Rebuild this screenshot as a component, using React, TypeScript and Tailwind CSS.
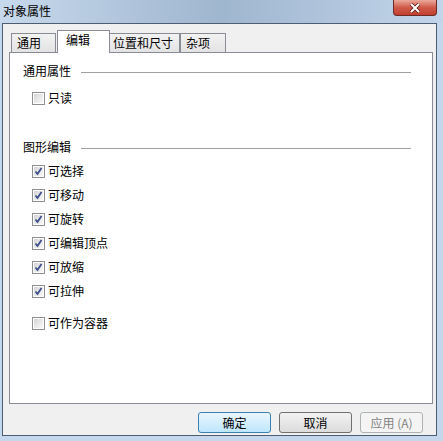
import React from "react";

const font = { fontFamily: '"Microsoft YaHei","Noto Sans CJK SC","Noto Sans",sans-serif' };

function CheckBox({ checked }: { checked: boolean }) {
  return (
    <div className="w-[13px] h-[13px] border border-[#8e8f8f] bg-white p-[1px] shrink-0">
      <div className="w-full h-full bg-gradient-to-br from-[#d4d4d4] via-[#e8e8e8] to-[#f8f8f8] relative">
        {checked && (
          <svg width="9" height="9" viewBox="0 0 9 9" className="absolute left-0 top-0">
            <path d="M1.5 4.5 L3.5 7 L7.5 1" stroke="#3d4f8a" strokeWidth="1.8" fill="none" />
          </svg>
        )}
      </div>
    </div>
  );
}

function CheckRow({ label, checked, mt }: { label: string; checked: boolean; mt: string }) {
  return (
    <div className={`flex items-center h-[16px] pl-[22px] gap-[3px] ${mt}`}>
      <CheckBox checked={checked} />
      <span className="text-[12px] leading-[16px] text-black">{label}</span>
    </div>
  );
}

function GroupHeader({ label, mt }: { label: string; mt: string }) {
  return (
    <div className={`flex items-center h-[16px] pl-[13px] pr-[21px] ${mt}`}>
      <span className="text-[12px] leading-[16px] text-black">{label}</span>
      <div className="flex-1 ml-[10px] h-px bg-[#a0a0a0] mt-[3px]" />
    </div>
  );
}

export default function App() {
  return (
    <div style={font} className="w-[443px] h-[441px] bg-[#c4d7ec] flex flex-col overflow-hidden">
      <div className="h-[23px] relative bg-gradient-to-r from-[#c7d9ec] via-[#9fb6cf] to-[#c2d5ea] flex items-center">
        <span className="text-[12px] leading-[14px] text-black pl-[3px] pb-[1px]">对象属性</span>
        <div className="absolute left-[393px] top-0 w-[44px] h-[16px] rounded-b-[4px] border border-t-0 border-[#6d2a24] bg-gradient-to-b from-[#e9a99c] via-[#d0594a] to-[#c2402f] flex items-center justify-center">
          <svg width="12" height="10" viewBox="0 0 12 10">
            <path d="M2 1 L10 9 M10 1 L2 9" stroke="#5a1a14" strokeWidth="3.6" />
            <path d="M2 1 L10 9 M10 1 L2 9" stroke="#ffffff" strokeWidth="2" />
          </svg>
        </div>
      </div>
      <div className="ml-[2px] w-[435px] h-[413px] border border-[#4e5e72] bg-[#f0f0f0] flex flex-col pt-[6px] pl-[6px]">
        <div className="flex items-end h-[22px] pl-[2px] text-[12px] text-black">
          <div className="w-[45px] h-[19px] border border-b-0 border-[#898c95] bg-gradient-to-b from-[#f2f2f2] to-[#e3e3e3] pl-[5px] leading-[18px]">通用</div>
          <div className="w-[53px] h-[23px] -mb-px ml-[1px] border border-b-0 border-[#898c95] bg-white pl-[8px] leading-[18px] relative z-10">编辑</div>
          <div className="w-[70px] h-[19px] border border-b-0 border-l-0 border-[#898c95] bg-gradient-to-b from-[#f2f2f2] to-[#e3e3e3] pl-[3px] leading-[18px]">位置和尺寸</div>
          <div className="w-[46px] h-[19px] border border-b-0 border-[#898c95] bg-gradient-to-b from-[#f2f2f2] to-[#e3e3e3] pl-[5px] leading-[18px]">杂项</div>
        </div>
        <div className="w-[424px] h-[352px] border border-[#898c95] bg-white flex flex-col">
          <GroupHeader label="通用属性" mt="mt-[10px]" />
          <CheckRow label="只读" checked={false} mt="mt-[11px]" />
          <GroupHeader label="图形编辑" mt="mt-[33px]" />
          <CheckRow label="可选择" checked mt="mt-[8px]" />
          <CheckRow label="可移动" checked mt="mt-[8px]" />
          <CheckRow label="可旋转" checked mt="mt-[8px]" />
          <CheckRow label="可编辑顶点" checked mt="mt-[8px]" />
          <CheckRow label="可放缩" checked mt="mt-[8px]" />
          <CheckRow label="可拉伸" checked mt="mt-[8px]" />
          <CheckRow label="可作为容器" checked={false} mt="mt-[16px]" />
        </div>
        <div className="flex mt-[8px] pl-[189px] gap-[8px] text-[12px]">
          <div className="w-[73px] h-[21px] rounded-[3px] border border-[#3c7fb1] bg-gradient-to-b from-[#eaf6fd] to-[#bee6fd] flex items-center justify-center text-black">确定</div>
          <div className="w-[73px] h-[21px] rounded-[3px] border border-[#707070] bg-gradient-to-b from-[#f2f2f2] to-[#dcdcdc] flex items-center justify-center text-black">取消</div>
          <div className="w-[63px] h-[21px] rounded-[3px] border border-[#adb2b5] bg-[#f4f4f4] flex items-center justify-center text-[#838383]">应用 (A)</div>
        </div>
      </div>
    </div>
  );
}
